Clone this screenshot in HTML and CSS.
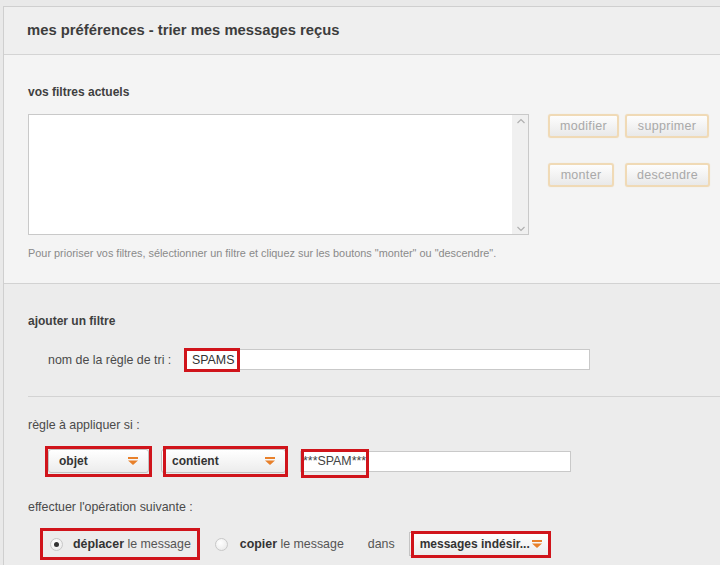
FILE: index.html
```html
<!DOCTYPE html>
<html lang="fr">
<head>
<meta charset="utf-8">
<title>mes préférences - trier mes messages reçus</title>
<link rel="stylesheet" href="styles.css">
</head>
<body>
<div class="frame">
  <div class="panel">
    <div class="header">
      <h1 class="title">mes préférences - trier mes messages reçus</h1>
    </div>

    <section class="current">
      <h2 class="section-title">vos filtres actuels</h2>
      <div class="current-row">
        <div class="listbox">
          <div class="list-area"></div>
          <div class="scrollbar">
            <svg class="chev" width="10" height="8" viewBox="0 0 10 8"><path d="M1.5 6 L5 2.5 L8.5 6" fill="none" stroke="#b0b0b0" stroke-width="1.2"/></svg>
            <svg class="chev" width="10" height="8" viewBox="0 0 10 8"><path d="M1.5 2 L5 5.5 L8.5 2" fill="none" stroke="#b0b0b0" stroke-width="1.2"/></svg>
          </div>
        </div>
        <div class="btn-grid">
          <div class="btn-row">
            <button class="btn btn-modifier">modifier</button>
            <button class="btn btn-supprimer">supprimer</button>
          </div>
          <div class="btn-row btn-row-2">
            <button class="btn btn-monter">monter</button>
            <button class="btn btn-descendre">descendre</button>
          </div>
        </div>
      </div>
      <p class="help">Pour prioriser vos filtres, sélectionner un filtre et cliquez sur les boutons "monter" ou "descendre".</p>
    </section>

    <section class="add">
      <h2 class="section-title add-title">ajouter un filtre</h2>
      <div class="name-row">
        <span class="label">nom de la règle de tri :</span>
        <div class="field name-field">
          <span class="field-text">SPAMS</span>
          <span class="mark mark-spams"></span>
        </div>
      </div>
      <div class="divider"></div>

      <p class="label rule-label">règle à appliquer si :</p>
      <div class="rule-row">
        <div class="select sel-objet">
          <span class="sel-text">objet</span>
          <svg class="arrow" width="10" height="8" viewBox="0 0 10 8"><rect x="0" y="0" width="10" height="2" fill="#e8802a"/><path d="M0 3.5 H10 L5 8 Z" fill="#e8802a"/></svg>
          <span class="mark mark-objet"></span>
        </div>
        <div class="select sel-contient">
          <span class="sel-text">contient</span>
          <svg class="arrow" width="10" height="8" viewBox="0 0 10 8"><rect x="0" y="0" width="10" height="2" fill="#e8802a"/><path d="M0 3.5 H10 L5 8 Z" fill="#e8802a"/></svg>
          <span class="mark mark-contient"></span>
        </div>
        <div class="field value-field">
          <span class="field-text value-text">***SPAM***</span>
          <span class="mark mark-value"></span>
        </div>
      </div>

      <p class="label op-label">effectuer l'opération suivante :</p>
      <div class="op-row">
        <label class="radio radio-move">
          <span class="radio-dot checked"></span>
          <span><b>déplacer</b> le message</span>
          <span class="mark mark-move"></span>
        </label>
        <label class="radio radio-copy">
          <span class="radio-dot"></span>
          <span><b>copier</b> le message</span>
        </label>
        <span class="dans">dans</span>
        <div class="select sel-folder">
          <span class="sel-text">messages indésir...</span>
          <svg class="arrow" width="10" height="8" viewBox="0 0 10 8"><rect x="0" y="0" width="10" height="2" fill="#e8802a"/><path d="M0 3.5 H10 L5 8 Z" fill="#e8802a"/></svg>
          <span class="mark mark-folder"></span>
        </div>
      </div>
    </section>
  </div>
</div>
</body>
</html>
```
FILE: styles.css
```css
* { box-sizing: border-box; }
html, body { margin: 0; padding: 0; }
body {
  background: #e9e9e9;
  font-family: "Liberation Sans", Arial, sans-serif;
  color: #444;
  width: 720px;
  height: 565px;
  overflow: hidden;
}
.frame {
  padding: 6px 0 0 3px;
  background: #e9e9e9;
  height: 565px;
}
.panel {
  border-top: 1px solid #cfcfcf;
  border-left: 1px solid #cfcfcf;
  background: #ececec;
  height: 559px;
  overflow: hidden;
}
.header {
  height: 48px;
  background: #efefef;
  border-bottom: 1px solid #d4d4d4;
  display: flex;
  align-items: center;
  padding-left: 23px;
}
.title {
  margin: 0;
  font-size: 14.8px;
  font-weight: bold;
  color: #3d3d3d;
  padding-bottom: 2px;
}
.current {
  background: #f4f4f4;
  border-bottom: 1px solid #d2d2d2;
  padding: 30px 0 24px 24px;
}
.section-title {
  margin: 0;
  font-size: 12px;
  font-weight: bold;
  color: #3f3f3f;
  line-height: 14px;
}
.current-row {
  display: flex;
  gap: 19px;
  margin-top: 15px;
}
.listbox {
  width: 501px;
  height: 121px;
  background: #fff;
  border: 1px solid #c9c9c9;
  display: flex;
}
.list-area { flex: 1; }
.scrollbar {
  width: 16px;
  background: #f0f0f0;
  border-left: 1px solid #f0f0f0;
  display: flex;
  flex-direction: column;
  justify-content: space-between;
  align-items: center;
  padding: 2px 0 1px;
}
.chev { display: block; }
.btn-grid {
  display: flex;
  flex-direction: column;
  gap: 25px;
}
.btn-row {
  display: flex;
  gap: 6px;
}
.btn-row-2 { gap: 11px; }
.btn {
  height: 24px;
  border: 2px solid #f0dab6;
  border-radius: 3px;
  background: linear-gradient(#fdfdfd, #e9e9e9);
  color: #a9a9a9;
  font-family: "Liberation Sans", Arial, sans-serif;
  font-size: 12.5px;
  letter-spacing: 0.3px;
  padding: 0;
  box-shadow: 0 0 1px #ead9bf;
}
.btn-modifier { width: 71px; }
.btn-supprimer { width: 84px; }
.btn-monter { width: 66px; }
.btn-descendre { width: 85px; }
.help {
  margin: 12px 0 0;
  font-size: 10.9px;
  color: #8a8a8a;
  line-height: 12px;
}
.add {
  padding: 30px 0 0 24px;
}
.label {
  font-size: 12.4px;
  color: #4a4a4a;
}
.name-row {
  display: flex;
  align-items: center;
  margin-top: 21px;
  padding-left: 20px;
}
.name-row .label { width: 136px; }
.field {
  position: relative;
  background: #fff;
  border: 1px solid #c9c9c9;
  height: 21px;
  display: flex;
  align-items: center;
}
.name-field { width: 406px; padding-left: 7px; }
.field-text {
  font-size: 12.4px;
  color: #333;
}
.mark {
  position: absolute;
  border: 3px solid #d0141b;
  pointer-events: none;
}
.mark-spams { left: -1px; top: -2px; width: 56px; height: 24px; }
.divider {
  height: 1px;
  background: #d3d3d3;
  margin-top: 26px;
}
.rule-label { margin: 21px 0 0; line-height: 14px; }
.rule-row {
  display: flex;
  align-items: center;
  margin-top: 17px;
  padding-left: 20px;
}
.select {
  position: relative;
  height: 24px;
  background: linear-gradient(#ffffff, #ececec);
  border: 1px solid #c4c4c4;
  border-radius: 3px;
  display: flex;
  align-items: center;
  justify-content: space-between;
  padding: 0 10px 0 10px;
}
.sel-text {
  font-size: 12px;
  font-weight: bold;
  color: #333;
}
.arrow { display: block; }
.sel-objet { width: 101px; }
.mark-objet { left: -4px; top: -4px; width: 107px; height: 31px; }
.sel-contient { width: 125px; margin-left: 12px; }
.mark-contient { left: 1px; top: -4px; width: 125px; height: 31px; }
.value-field { width: 271px; height: 21px; margin-left: 14px; padding-left: 2px; }
.value-text { color: #444; }
.mark-value { left: 0px; top: -3px; width: 68px; height: 29px; }
.op-label { margin: 27px 0 0; line-height: 14px; }
.op-row {
  display: flex;
  align-items: center;
  margin-top: 18px;
  padding-left: 22px;
}
.radio {
  position: relative;
  display: flex;
  align-items: center;
  font-size: 12.4px;
  color: #555;
}
.radio b { color: #333; }
.radio-dot {
  width: 13px;
  height: 13px;
  border-radius: 50%;
  border: 1px solid #c8c8c8;
  background: radial-gradient(circle at 40% 35%, #ffffff, #e6e6e6);
  margin-right: 10px;
  position: relative;
}
.radio-dot.checked::after {
  content: "";
  position: absolute;
  left: 3px;
  top: 3px;
  width: 5px;
  height: 5px;
  border-radius: 50%;
  background: #333;
}
.mark-move { left: -10px; top: -9px; width: 160px; height: 32px; }
.radio-copy { margin-left: 24px; }
.radio-copy .radio-dot { margin-right: 12px; }
.dans {
  font-size: 12.4px;
  color: #555;
  margin-left: 24px;
}
.sel-folder {
  width: 140px;
  margin-left: 14px;
  padding: 0 6px 0 10px;
  border-radius: 0;
}
.mark-folder { left: 1px; top: -2px; width: 140px; height: 27px; }
```
